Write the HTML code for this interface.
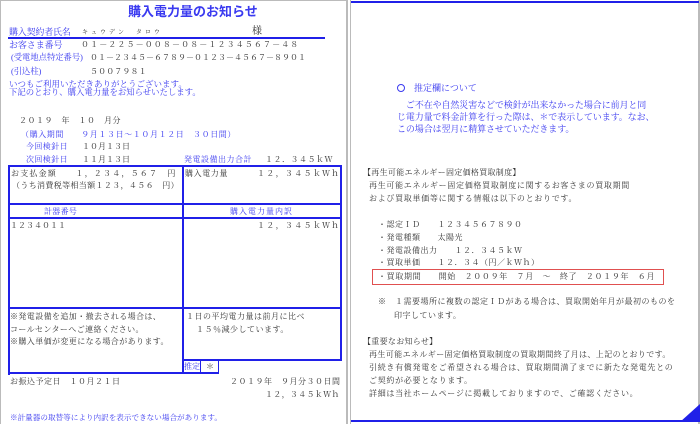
<!DOCTYPE html>
<html><head><meta charset="utf-8"><style>
*{margin:0;padding:0;box-sizing:border-box}
body{width:700px;height:424px;background:#fff;position:relative;overflow:hidden;font-family:"Liberation Serif","Noto Serif CJK SC","Noto Sans CJK JP",serif;}
.t{position:absolute;white-space:nowrap;font-size:8px;line-height:10px;color:#333;letter-spacing:0.5px}
.b{color:#3a3af0}
.l{position:absolute;background:#2020e8}
.g{position:absolute;background:#bbb}
</style></head><body>
<div class="g" style="left:0;top:0;width:348px;height:1px"></div>
<div class="g" style="left:0;top:0;width:1px;height:424px"></div>
<div class="g" style="left:346px;top:0;width:2px;height:424px"></div>
<div class="g" style="left:350px;top:0;width:1px;height:424px"></div>
<div class="g" style="left:698px;top:0;width:2px;height:424px"></div>
<div class="l" style="left:351px;top:1px;width:348px;height:2px"></div>
<div class="l" style="left:351px;top:420px;width:348px;height:2px"></div>
<svg style="position:absolute;left:680px;top:404px" width="20" height="20"><polygon points="20,0 20,18 0,18" fill="#2020e8"/></svg>

<!-- left page -->
<div class="t b" style="left:128px;top:4px;font-size:13px;line-height:16px;font-weight:bold;letter-spacing:0;font-family:'Liberation Sans','Noto Sans CJK JP',sans-serif">購入電力量のお知らせ</div>
<div class="t b" style="left:9px;top:26px;font-size:9px;line-height:12px;letter-spacing:-0.2px">購入契約者氏名</div>
<div class="t" style="left:82px;top:28px;font-size:6px;letter-spacing:3px">キュウデン　タロウ</div>
<div class="t" style="left:252px;top:26px;font-size:10px;line-height:12px">様</div>
<div class="l" style="left:8px;top:37px;width:317px;height:2px"></div>
<div class="t b" style="left:9px;top:39px;font-size:9px;line-height:12px;letter-spacing:-0.1px">お客さま番号</div>
<div class="t" style="left:81px;top:40px;letter-spacing:1.1px">０１－２２５－００８－０８－１２３４５６７－４８</div>
<div class="t b" style="left:11px;top:52px;font-size:8.3px;line-height:11px;letter-spacing:0">(受電地点特定番号)</div>
<div class="t" style="left:90px;top:53px;letter-spacing:0">０１－２３４５－６７８９－０１２３－４５６７－８９０１</div>
<div class="t b" style="left:11px;top:66px;font-size:8.3px;line-height:11px;letter-spacing:0">(引込柱)</div>
<div class="t" style="left:90px;top:67px;letter-spacing:0.1px">５００７９８１</div>
<div class="t b" style="left:9px;top:79px;font-size:8.5px;line-height:10px;letter-spacing:0">いつもご利用いただきありがとうございます。</div>
<div class="t b" style="left:9px;top:88px;font-size:8.4px;line-height:10px;letter-spacing:0">下記のとおり、購入電力量をお知らせいたします。</div>
<div class="t" style="left:19px;top:116px">２０１９　年　１０　月分</div>
<div class="t b" style="left:21px;top:130px;letter-spacing:0.6px">（購入期間　　９月１３日～１０月１２日　３０日間）</div>
<div class="t b" style="left:26px;top:142px;letter-spacing:0.4px">今回検針日</div>
<div class="t" style="left:82px;top:142px;letter-spacing:0">１０月１３日</div>
<div class="t b" style="left:26px;top:155px;letter-spacing:0.4px">次回検針日</div>
<div class="t" style="left:82px;top:155px;letter-spacing:0">１１月１３日</div>
<div class="t b" style="left:184px;top:155px">発電設備出力合計</div>
<div class="t" style="left:265px;top:155px">１２．３４５ｋＷ</div>

<!-- table -->
<div class="l" style="left:8px;top:165px;width:334px;height:2px"></div>
<div class="l" style="left:8px;top:165px;width:2px;height:210px"></div>
<div class="l" style="left:340px;top:165px;width:2px;height:196px"></div>
<div class="l" style="left:182px;top:165px;width:2px;height:209px"></div>
<div class="l" style="left:8px;top:203px;width:334px;height:2px"></div>
<div class="l" style="left:8px;top:217px;width:334px;height:2px"></div>
<div class="l" style="left:8px;top:307px;width:334px;height:2px"></div>
<div class="l" style="left:182px;top:359px;width:160px;height:2px"></div>
<div class="l" style="left:8px;top:372px;width:211px;height:2px"></div>
<div class="l" style="left:200px;top:359px;width:1px;height:14px"></div>
<div class="l" style="left:218px;top:359px;width:1px;height:15px"></div>
<div class="t" style="left:11px;top:169px;letter-spacing:1.2px">お支払金額　　１，２３４，５６７　円</div>
<div class="t" style="left:12px;top:181px;letter-spacing:0.35px">（うち消費税等相当額１２３，４５６　円）</div>
<div class="t" style="left:185px;top:169px;letter-spacing:0.6px">購入電力量</div>
<div class="t" style="left:257px;top:169px;letter-spacing:1.3px">１２，３４５</div>
<div class="t" style="left:313px;top:169px;letter-spacing:1px">ｋＷｈ</div>
<div class="t b" style="left:44px;top:207px;letter-spacing:0.3px">計器番号</div>
<div class="t b" style="left:230px;top:207px;letter-spacing:1px">購入電力量内訳</div>
<div class="t" style="left:10px;top:221px;letter-spacing:0">１２３４０１１</div>
<div class="t" style="left:257px;top:221px;letter-spacing:1.3px">１２，３４５</div>
<div class="t" style="left:313px;top:221px;letter-spacing:1px">ｋＷｈ</div>
<div class="t" style="left:10px;top:312px;letter-spacing:0.4px">※発電設備を追加・撤去される場合は、</div>
<div class="t" style="left:10px;top:325px;letter-spacing:0.4px">コールセンターへご連絡ください。</div>
<div class="t" style="left:10px;top:337px;letter-spacing:0.4px">※購入単価が変更になる場合があります。</div>
<div class="t" style="left:186px;top:312px">１日の平均電力量は前月に比べ</div>
<div class="t" style="left:196px;top:325px">１５％減少しています。</div>
<div class="t b" style="left:184px;top:362px;letter-spacing:0">推定</div>
<div class="t" style="left:206px;top:362px">＊</div>
<div class="t" style="left:10px;top:377px">お振込予定日　１０月２１日</div>
<div class="t" style="left:230px;top:377px">２０１９年　９月分３０日間</div>
<div class="t" style="left:265px;top:390px;letter-spacing:0.3px">１２，３４５ｋＷｈ</div>
<div class="t b" style="left:10px;top:413px;font-size:7.6px;letter-spacing:0">※計量器の取替等により内訳を表示できない場合があります。</div>

<!-- right page -->
<div style="position:absolute;left:397px;top:84px;width:8px;height:8px;border:1px solid #3a3af0;border-radius:50%"></div>
<div class="t b" style="left:414px;top:82px;font-size:9px;line-height:12px;letter-spacing:0">推定欄について</div>
<div class="t b" style="left:397px;top:99px;font-size:9px;line-height:12px;letter-spacing:-0.1px">　ご不在や自然災害などで検針が出来なかった場合に前月と同</div>
<div class="t b" style="left:397px;top:111px;font-size:9px;line-height:12px;letter-spacing:-0.1px">じ電力量で料金計算を行った際は、＊で表示しています。なお、</div>
<div class="t b" style="left:397px;top:123px;font-size:9px;line-height:12px;letter-spacing:-0.1px">この場合は翌月に精算させていただきます。</div>
<div class="t" style="left:363px;top:168px;letter-spacing:0.3px">【再生可能エネルギー固定価格買取制度】</div>
<div class="t" style="left:369px;top:181px;letter-spacing:0.7px">再生可能エネルギー固定価格買取制度に関するお客さまの買取期間</div>
<div class="t" style="left:369px;top:194px;letter-spacing:0.7px">および買取単価等に関する情報は以下のとおりです。</div>
<div class="t" style="left:378px;top:220px">・認定ＩＤ　　１２３４５６７８９０</div>
<div class="t" style="left:378px;top:233px">・発電種類　　太陽光</div>
<div class="t" style="left:378px;top:246px">・発電設備出力　　１２．３４５ｋＷ</div>
<div class="t" style="left:378px;top:258px">・買取単価　　１２．３４（円／ｋＷｈ）</div>
<div style="position:absolute;left:372px;top:269px;width:292px;height:16px;border:1px solid #e05050"></div>
<div class="t" style="left:378px;top:272px;letter-spacing:0.66px">・買取期間　　開始　２００９年　７月　～　終了　２０１９年　６月</div>
<div class="t" style="left:378px;top:297px">※　１需要場所に複数の認定ＩＤがある場合は、買取開始年月が最初のものを</div>
<div class="t" style="left:394px;top:311px">印字しています。</div>
<div class="t" style="left:363px;top:337px;letter-spacing:0.3px">【重要なお知らせ】</div>
<div class="t" style="left:369px;top:350px;letter-spacing:0.4px">再生可能エネルギー固定価格買取制度の買取期間終了月は、上記のとおりです。</div>
<div class="t" style="left:369px;top:363px;letter-spacing:0.7px">引続き有償発電をご希望される場合は、買取期間満了までに新たな発電先との</div>
<div class="t" style="left:369px;top:376px;letter-spacing:0.7px">ご契約が必要となります。</div>
<div class="t" style="left:369px;top:389px;letter-spacing:0.7px">詳細は当社ホームページに掲載しておりますので、ご確認ください。</div>
</body></html>
